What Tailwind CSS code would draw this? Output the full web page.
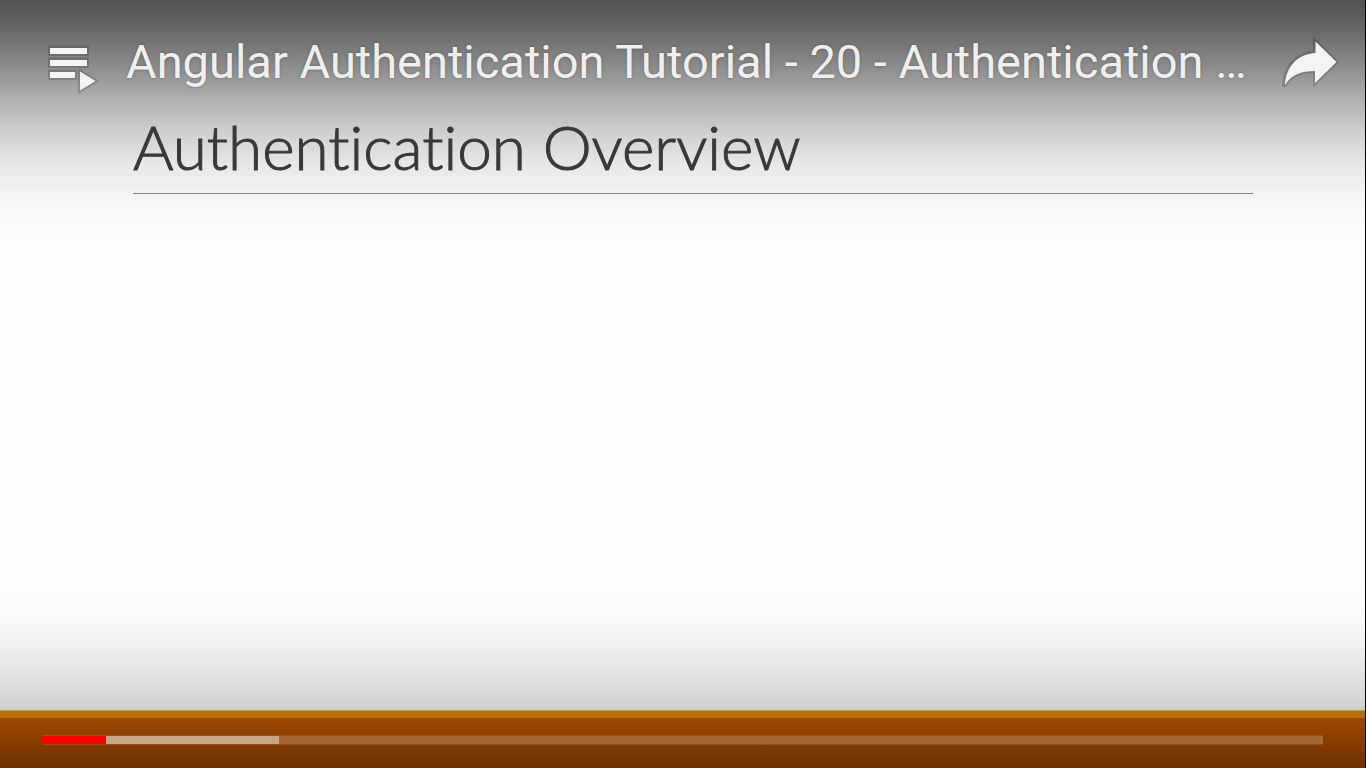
<!DOCTYPE html>
<html lang="en">
<head>
<meta charset="utf-8">
<meta name="viewport" content="width=device-width, initial-scale=1">
<title>Angular Authentication Tutorial</title>
<script src="https://cdn.jsdelivr.net/npm/@tailwindcss/browser@4"></script>
</head>
<body class="bg-black">
<main class="flex h-screen flex-col overflow-hidden border-r border-black bg-[linear-gradient(to_bottom,#535353_0px,#5c5c5c_16px,#707070_38px,#8e8e8e_68px,#b0b0b0_100px,#d0d0d0_133px,#e8e8e8_165px,#f5f5f5_198px,#fcfcfc_235px,#fefefe_260px,#fefefe_580px,#fafafa_612px,#f2f2f2_640px,#e6e6e6_668px,#dadada_692px,#cdd0ce_710px)] font-['Roboto',sans-serif]">
  <header class="flex h-28 shrink-0 items-start pt-8 pr-6 pl-11">
    <button type="button" aria-label="Playlist" class="mt-2 h-14 w-14 shrink-0">
      <svg viewBox="0 0 56 56" class="block h-14 w-14">
        <path d="M4 5.500h41v10.500H4zM4 17.500h41V28H4zM4 29.500h29V40H4zM34 28V54L55 41z" fill="#000" fill-opacity=".16"/>
        <path d="M6 8h37v6H6zM6 20h37v6H6zM6 32h25v6H6zM36 31.500V50.500L51.500 41z" fill="#f4f4f4"/>
      </svg>
    </button>
    <h1 class="ml-[26px] min-w-0 flex-1 overflow-hidden text-[47px] leading-[60px] whitespace-nowrap text-[#efefef] [text-shadow:0_0_3px_rgb(0_0_0/0.3)]">Angular Authentication Tutorial - 20 - Authentication …</h1>
    <button type="button" aria-label="Share" class="h-16 w-16 shrink-0">
      <svg viewBox="0 0 64 64" class="block h-16 w-16">
        <path d="M36 4V19C17 21 7 34 5 52C4 56 8 56 10 54C15 45 24 41 36 41V56L62 30z" fill="#000" fill-opacity=".16"/>
        <path d="M38.500 9.500V21C21 22 9 34 8 53C14 43 24 39 38 39V51L59.500 30z" fill="#f4f4f4"/>
      </svg>
    </button>
  </header>
  <section class="min-h-0 flex-1 pr-28 pl-[133px]">
    <h2 class="h-[82px] border-b border-[#858585] text-[62px] leading-[68px] font-light whitespace-nowrap text-[#39383a] font-['Lato',sans-serif] [font-variant-ligatures:none] [-webkit-text-stroke:1px_#39383a]">Authentication Overview</h2>
  </section>
  <footer class="shrink-0">
    <div class="h-2 border-t border-[#b89c5c] bg-[#bd6c00]"></div>
    <div class="flex h-[50px] items-start bg-linear-to-b from-[#9c4800] to-[#703000] pt-[17px] pr-[42px] pl-[42px]">
      <input type="range" aria-label="Seek" min="0" max="100" value="5" class="m-0 block h-[10px] w-full appearance-none border-y border-white/10 bg-[linear-gradient(to_right,#fe0000_5%,#c8a488_5%,#c8a488_18.5%,#a46835_18.5%)] bg-clip-padding [&::-webkit-slider-thumb]:h-0 [&::-webkit-slider-thumb]:w-0 [&::-webkit-slider-thumb]:appearance-none">
    </div>
  </footer>
</main>
</body>
</html>
